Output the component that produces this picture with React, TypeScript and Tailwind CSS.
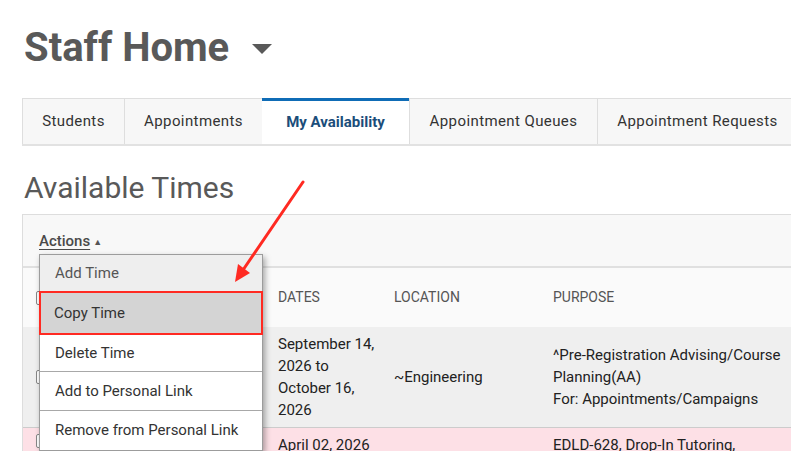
import React from 'react';

const tabs = [
  { id: 'students', name: 'Students', width: 'w-[102px]' },
  { id: 'appointments', name: 'Appointments', width: 'w-[138px]' },
  { id: 'availability', name: 'My Availability', width: 'w-[147px]' },
  { id: 'queues', name: 'Appointment Queues', width: 'w-[188px]' },
  { id: 'requests', name: 'Appointment Requests', width: 'w-[200px]' },
];

const menuItems = [
  { label: 'Add Time', className: 'h-[36px] pl-[15px] bg-[#eeeeee] text-[#555]' },
  { label: 'Copy Time', className: 'h-[44px] pl-[13px] bg-[#d4d4d4] text-[#333] border-2 border-[#ff2a22] -mx-px' },
  { label: 'Delete Time', className: 'h-[37px] pl-[15px] bg-white text-[#333] border-b border-[#a8a8a8]' },
  { label: 'Add to Personal Link', className: 'h-[39px] pl-[15px] bg-white text-[#333] border-b border-[#a8a8a8]' },
  { label: 'Remove from Personal Link', className: 'h-[39px] pl-[15px] bg-white text-[#333]' },
];

const Checkbox = () => (
  <span className="inline-block h-[14px] w-[14px] rounded-[2px] border border-[#888] bg-white" />
);

const App = () => {
  const activeTab = 'availability';

  return (
    <div className="relative h-[451px] w-[791px] overflow-hidden bg-white font-['Roboto',sans-serif]">
      {/* Page title */}
      <div className="flex items-center pl-[24px] pt-[23px]">
        <h1 className="text-[40px] font-bold leading-[50px] text-[#595959]">Staff Home</h1>
        <svg width="20" height="10" viewBox="0 0 20 10" className="ml-[23px] mt-[2px]">
          <polygon points="0,0 20,0 10,10" fill="#595959" />
        </svg>
      </div>

      {/* Tabs */}
      <div className="ml-[22px] mt-[25px] flex h-[48px] border-b-2 border-[#e2e2e2]">
        {tabs.map((tab) => {
          const active = tab.id === activeTab;
          return (
            <div
              key={tab.id}
              className={`flex shrink-0 items-center justify-center text-[15px] ${tab.width} ${
                active
                  ? 'border-t-[3px] border-[#0f6cb6] bg-white font-bold text-[#1b4d7a]'
                  : 'border-l border-t border-[#dedede] bg-[#f7f7f7] text-[#333] tracking-[0.4px]'
              }`}
            >
              {tab.name}
            </div>
          );
        })}
      </div>

      {/* Section heading */}
      <h2 className="mt-[24px] pl-[24px] text-[30px] leading-[36px] text-[#595959]">Available Times</h2>

      {/* Table */}
      <div className="relative ml-[22px] mt-[8px] w-[900px] border-l border-t border-[#dddddd]">
        <div className="flex h-[51px] items-end bg-[#f8f8f8] pb-[14px] pl-[16px]">
          <span className="text-[15px] font-medium text-[#4a4a4a] underline underline-offset-[3px]">Actions</span>
          <span className="mb-[3px] ml-[3px] text-[9px] text-[#555]">▲</span>
        </div>

        <div className="grid grid-cols-[40px_200px_116px_159px_385px] border-t-2 border-[#e0e0e0] bg-[#fafafa] text-[14px] text-[#555]">
          <div className="flex h-[59px] items-center pl-[13px]">
            <Checkbox />
          </div>
          <div />
          <div className="flex items-center pl-[15px]">DATES</div>
          <div className="flex items-center pl-[15px]">LOCATION</div>
          <div className="flex items-center pl-[15px]">PURPOSE</div>
        </div>

        <div className="grid grid-cols-[40px_200px_116px_159px_385px] border-b border-[#cccccc] bg-[#efefef] text-[15px] leading-[22px] text-[#222]">
          <div className="flex items-center pl-[13px]">
            <Checkbox />
          </div>
          <div />
          <div className="py-[6px] pl-[15px] pr-[2px]">September 14, 2026 to October 16, 2026</div>
          <div className="flex items-center pl-[15px]">~Engineering</div>
          <div className="flex flex-col justify-center pl-[15px]">
            <span>^Pre-Registration Advising/Course</span>
            <span>Planning(AA)</span>
            <span>For: Appointments/Campaigns</span>
          </div>
        </div>

        <div className="grid grid-cols-[40px_200px_116px_159px_385px] bg-[#fde0e6] text-[15px] leading-[22px] text-[#222]">
          <div className="flex items-start pl-[13px] pt-[6px]">
            <Checkbox />
          </div>
          <div />
          <div className="pl-[15px] pt-[6px]">April 02, 2026</div>
          <div />
          <div className="pl-[15px] pt-[6px]">EDLD-628, Drop-In Tutoring,</div>
        </div>

        {/* Actions dropdown */}
        <div className="absolute left-[16px] top-[39px] w-[224px] border border-[#9c9c9c] bg-white shadow-[2px_3px_6px_rgba(0,0,0,0.35)]">
          {menuItems.map((item) => (
            <div key={item.label} className={`flex items-center text-[15px] ${item.className}`}>
              {item.label}
            </div>
          ))}
        </div>
      </div>

      {/* Annotation arrow */}
      <svg className="pointer-events-none absolute left-0 top-0" width="791" height="451">
        <line x1="303" y1="182" x2="243" y2="270" stroke="#ff2a22" strokeWidth="3" strokeLinecap="round" />
        <polygon points="235,282 250,273 238,264" fill="#ff2a22" />
      </svg>
    </div>
  );
};

export default App;
